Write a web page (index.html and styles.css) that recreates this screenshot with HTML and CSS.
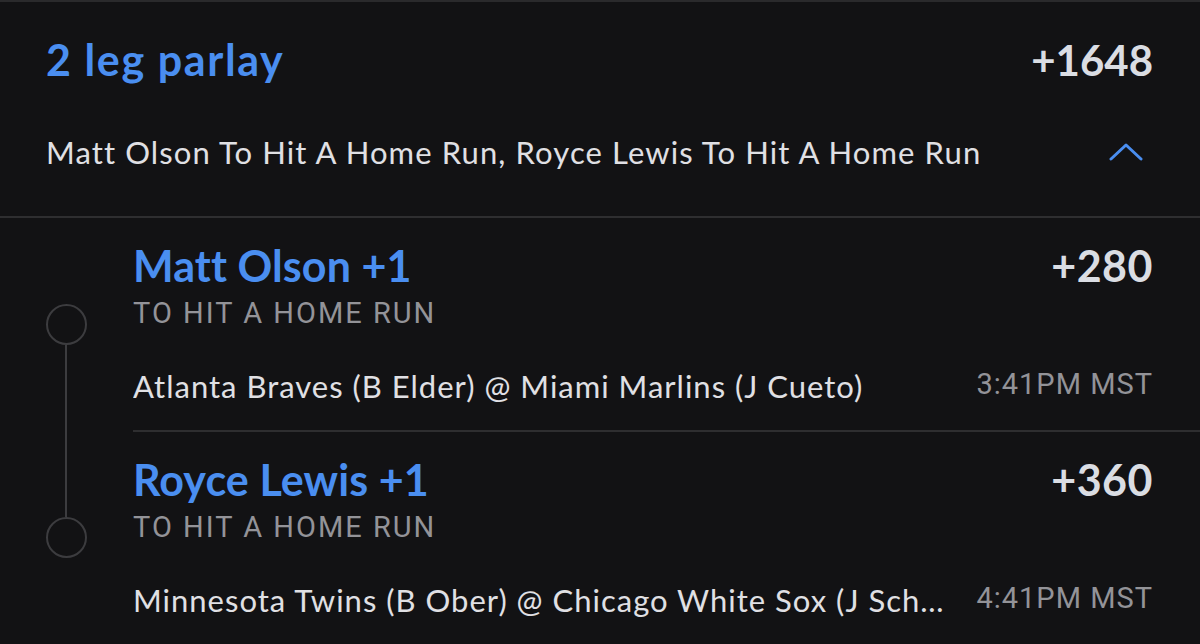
FILE: index.html
```html
<!DOCTYPE html>
<html>
<head>
<meta charset="utf-8">
<link rel="stylesheet" href="styles.css">
</head>
<body>
<div class="card">
  <div class="header">
    <div class="head-row">
      <div class="title">2 leg parlay</div>
      <div class="odds">+1648</div>
    </div>
    <div class="sub-row">
      <div class="summary">Matt Olson To Hit A Home Run, Royce Lewis To Hit A Home Run</div>
      <svg class="chevron" width="34" height="20" viewBox="0 0 34 20"><path d="M2 17 L17 3 L32 17" fill="none" stroke="#4a8ef0" stroke-width="3" stroke-linecap="round" stroke-linejoin="round"/></svg>
    </div>
  </div>
  <div class="legs">
    <div class="leg leg-first">
      <div class="rail">
        <div class="rail-gap"></div>
        <div class="node"></div>
        <div class="rail-line"></div>
      </div>
      <div class="leg-body">
        <div class="leg-top">
          <div class="leg-name">Matt Olson +1</div>
          <div class="leg-odds">+280</div>
        </div>
        <div class="market">TO HIT A HOME RUN</div>
        <div class="game-row">
          <div class="game">Atlanta Braves (B Elder) @ Miami Marlins (J Cueto)</div>
          <div class="time">3:41PM MST</div>
        </div>
      </div>
    </div>
    <div class="leg leg-last">
      <div class="rail">
        <div class="rail-line rail-top"></div>
        <div class="node"></div>
      </div>
      <div class="leg-body">
        <div class="leg-top">
          <div class="leg-name">Royce Lewis +1</div>
          <div class="leg-odds">+360</div>
        </div>
        <div class="market">TO HIT A HOME RUN</div>
        <div class="game-row">
          <div class="game">Minnesota Twins (B Ober) @ Chicago White Sox (J Schriever)</div>
          <div class="time">4:41PM MST</div>
        </div>
      </div>
    </div>
  </div>
</div>
</body>
</html>
```
FILE: styles.css
```css
html, body {
  margin: 0;
  padding: 0;
  background: #121214;
  height: 100%;
  overflow: hidden;
}
body {
  font-family: Lato, "Open Sans", sans-serif;
  color: #e0e0e4;
}
.card {
  border-top: 2px solid #2a2a2c;
}
.header {
  padding: 33px 47px 0 46px;
  border-bottom: 2px solid #2e2e30;
}
.head-row {
  display: flex;
  justify-content: space-between;
  align-items: flex-start;
  height: 50px;
}
.title {
  font-size: 43px;
  font-weight: 700;
  letter-spacing: 1.6px;
  color: #4a8ef0;
  line-height: 50px;
}
.odds {
  font-size: 42px;
  font-weight: 700;
  color: #dadde3;
  line-height: 50px;
}
.sub-row {
  display: flex;
  justify-content: space-between;
  align-items: flex-start;
  margin-top: 47px;
  padding-bottom: 44px;
}
.summary {
  font-size: 31px;
  letter-spacing: 1.1px;
  line-height: 40px;
  white-space: nowrap;
}
.chevron {
  margin-top: 10px;
  margin-right: 10px;
  flex-shrink: 0;
}
.legs {
  display: flex;
  flex-direction: column;
}
.leg {
  display: flex;
}
.rail {
  width: 133px;
  flex-shrink: 0;
  display: flex;
  flex-direction: column;
  align-items: flex-start;
  padding-left: 46px;
  box-sizing: border-box;
}
.rail-gap {
  height: 86px;
}
.node {
  width: 37px;
  height: 37px;
  border: 2px solid #3c3c3f;
  border-radius: 50%;
  flex-shrink: 0;
}
.rail-line {
  width: 2px;
  margin-left: 19px;
  background: #3c3c3f;
  flex: 1;
}
.rail-top {
  flex: 0 0 85px;
}
.leg-body {
  flex: 1;
  min-width: 0;
  padding-right: 47px;
}
.leg-first .leg-body {
  border-bottom: 2px solid #2e2e30;
  height: 214px;
  box-sizing: border-box;
}
.leg-top {
  display: flex;
  justify-content: space-between;
  align-items: flex-start;
  padding-top: 25px;
}
.leg-name {
  font-size: 43px;
  font-weight: 700;
  letter-spacing: 0.1px;
  color: #4a8ef0;
  line-height: 46px;
}
.leg-odds {
  font-size: 43px;
  font-weight: 700;
  letter-spacing: 0.5px;
  color: #dadde3;
  line-height: 46px;
}
.market {
  font-family: Roboto, sans-serif;
  font-size: 29px;
  font-weight: 400;
  letter-spacing: 2px;
  color: #939398;
  line-height: 36px;
  margin-top: 6px;
}
.game-row {
  display: flex;
  justify-content: space-between;
  align-items: flex-start;
  margin-top: 35px;
  gap: 28px;
}
.game {
  font-size: 31px;
  letter-spacing: 1px;
  line-height: 40px;
  white-space: nowrap;
  overflow: hidden;
  text-overflow: ellipsis;
  min-width: 0;
}
.time {
  font-family: Roboto, sans-serif;
  font-size: 29px;
  letter-spacing: 1px;
  line-height: 36px;
  color: #939398;
  white-space: nowrap;
  flex-shrink: 0;
}
```
